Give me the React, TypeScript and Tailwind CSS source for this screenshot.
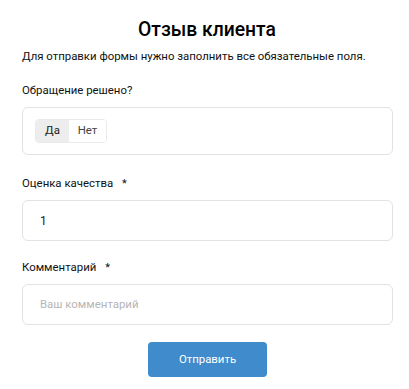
import React from "react";

export default function App() {
  return (
    <div className="w-[409px] h-[389px] bg-white pl-[22px] pr-[16px] pt-[16px] text-[#1a1a1a]" style={{ fontFamily: "Roboto, 'Noto Sans', sans-serif" }}>
      <h1 className="text-center text-[19.3px] font-medium leading-[28px] text-black pr-[1px]">Отзыв клиента</h1>
      <p className="mt-[3px] text-[11.4px] leading-[18px] text-[#111] whitespace-nowrap">Для отправки формы нужно заполнить все обязательные поля.</p>

      <div className="mt-[16px] text-[11.4px] leading-[18px] text-[#111]">Обращение решено?</div>
      <div className="mt-[8px] h-[48px] rounded-[6px] border border-[#e2e2e2] flex items-center px-[12px]">
        <div className="flex h-[24px] rounded-[4px] border border-[#eaeaea] overflow-hidden text-[11.4px]">
          <div className="w-[33px] flex items-center justify-center bg-[#ededed] text-[#222]">Да</div>
          <div className="w-[37px] flex items-center justify-center bg-white text-[#444]">Нет</div>
        </div>
      </div>

      <div className="mt-[19px] text-[11.4px] leading-[18px] text-[#111]">
        Оценка качества <span className="ml-[6px] text-[11px]">*</span>
      </div>
      <div className="mt-[7px] h-[41px] rounded-[6px] border border-[#e2e2e2] flex items-center px-[17px] text-[12px] text-[#222]">1</div>

      <div className="mt-[17px] text-[11.4px] leading-[18px] text-[#111]">
        Комментарий <span className="ml-[6px] text-[11px]">*</span>
      </div>
      <div className="mt-[7px] h-[41px] rounded-[6px] border border-[#e2e2e2] flex items-center px-[17px] text-[11.4px] text-[#b5b5b5]">Ваш комментарий</div>

      <div className="mt-[17px] flex justify-center">
        <button className="w-[119px] h-[35px] rounded-[4px] bg-[#3f8bcc] text-white text-[11.4px]">Отправить</button>
      </div>
    </div>
  );
}
